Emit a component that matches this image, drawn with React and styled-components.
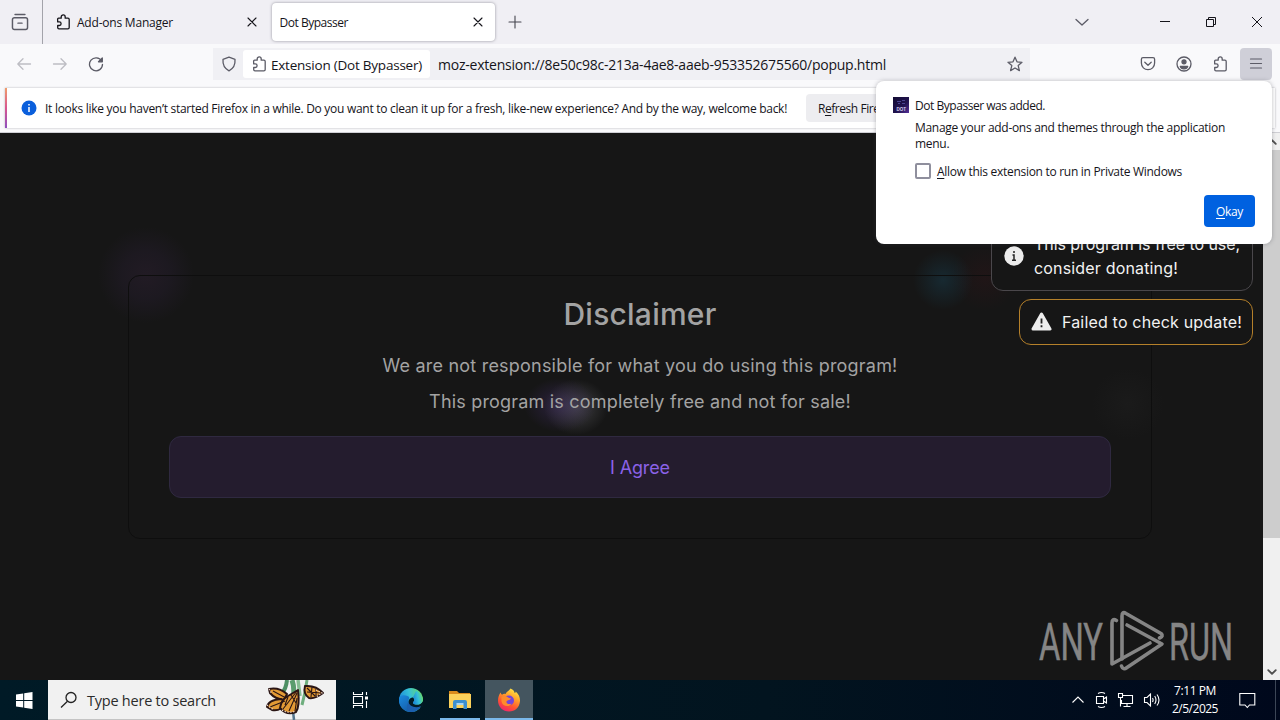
import React from "react";
import styled, { createGlobalStyle } from "styled-components";

export default function App() {
  return (
    <>
      <GlobalStyle />
      <Desktop>
        <TabBar />
        <AddressBar />
        <Notification />
        <Page />
        <Taskbar />
        <AddonPopup />
      </Desktop>
    </>
  );
}

const Icon = ({ size = 16, width = 1.3, children }) => (
  <svg
    width={size}
    height={size}
    viewBox="0 0 16 16"
    fill="none"
    stroke="currentColor"
    strokeWidth={width}
    strokeLinecap="round"
    strokeLinejoin="round"
  >
    {children}
  </svg>
);

const PuzzleIcon = () => (
  <Icon>
    <path d="M2.6 5.2c0-.6.4-1 1-1h2.600V2.900a2 2 0 0 1 4 0v1.300h2.700c.8 0 1.300.5 1.300 1.300v8.100c0 .8-.5 1.300-1.300 1.300H4c-.8 0-1.300-.5-1.300-1.300v-2.100h1.600a1.800 1.800 0 0 0 0-3.600H2.700z" />
  </Icon>
);

const CloseIcon = () => (
  <Icon width={1.1}>
    <path d="M4 4l8 8M12 4l-8 8" />
  </Icon>
);

const TabBar = () => (
  <Tabs>
    <RecentButton>
      <Icon size={18} width={1.3}>
        <path d="M3.600 1.400h8.800M3 4.200h10c1 0 1.700.7 1.700 1.700v7c0 1-.7 1.700-1.700 1.700H3c-1 0-1.700-.7-1.700-1.700v-7c0-1 .7-1.700 1.700-1.700zM6.200 9h3.600" />
      </Icon>
    </RecentButton>
    <Tab>
      <PuzzleIcon />
      <TabTitle $spacing={-0.213}>Add-ons Manager</TabTitle>
      <CloseIcon />
    </Tab>
    <Tab $active>
      <TabTitle $spacing={-0.473}>Dot Bypasser</TabTitle>
      <CloseIcon />
    </Tab>
    <NewTab>
      <Icon width={1.1}>
        <path d="M8 2v12M2 8h12" />
      </Icon>
    </NewTab>
    <WindowControls>
      <Icon width={1.3}>
        <path d="M2 5.500l6 5.500 6-5.500" />
      </Icon>
      <svg width="12" height="12" stroke="#15141a">
        <path d="M1 5.500h10" />
      </svg>
      <svg width="12" height="12" fill="none" stroke="#15141a">
        <path d="M1.500 3.500h7v7h-7zM3.500 3.500v-2h7v7h-2" />
      </svg>
      <svg width="12" height="12" stroke="#15141a">
        <path d="M1 1l10 10M11 1L1 11" />
      </svg>
    </WindowControls>
  </Tabs>
);

const AddressBar = () => (
  <Toolbar>
    <NavButtons>
      <NavButton $disabled>
        <Icon>
          <path d="M14.500 8H1.800M7 2.800L1.800 8 7 13.200" />
        </Icon>
      </NavButton>
      <NavButton $disabled>
        <Icon>
          <path d="M1.500 8h12.700M9 2.800L14.200 8 9 13.200" />
        </Icon>
      </NavButton>
      <NavButton>
        <Icon>
          <path d="M13.600 5A6.500 6.500 0 1 0 14.500 8.300" />
          <path d="M14.300 2v3.800H10.500z" fill="currentColor" />
        </Icon>
      </NavButton>
    </NavButtons>
    <UrlField>
      <Icon>
        <path d="M8 1.200l6 2.200c.4 4.800-1.200 9-6 11.400C3.200 12.400 1.600 8.200 2 3.400z" />
      </Icon>
      <Identity>
        <PuzzleIcon />
        <IdentityText>Extension (Dot Bypasser)</IdentityText>
      </Identity>
      <Url>moz-extension://8e50c98c-213a-4ae8-aaeb-953352675560/popup.html</Url>
      <Icon>
        <path d="M8 1.200l2 4.600 5 .5-3.800 3.300 1.200 5L8 12l-4.400 2.600 1.200-5L1 6.300l5-.5z" />
      </Icon>
    </UrlField>
    <ToolbarIcons>
      <Icon>
        <path d="M3 1.700h10c1 0 1.600.6 1.600 1.600V7c0 4-3 6.700-6.600 6.700S1.400 11 1.400 7V3.300c0-1 .6-1.600 1.600-1.600zM4.800 6.200L8 9.200l3.200-3" />
      </Icon>
      <Icon>
        <circle cx="8" cy="8" r="7" />
        <circle cx="8" cy="5.800" r="2" fill="currentColor" />
        <path d="M4.300 10.300h7.400c-.4 1.700-2 2.500-3.700 2.500s-3.300-.8-3.700-2.500z" fill="currentColor" />
      </Icon>
      <PuzzleIcon />
    </ToolbarIcons>
    <MenuButton>
      <Icon width={1.2}>
        <path d="M2.500 3h11M2.500 7.500h11M2.500 12h11" />
      </Icon>
    </MenuButton>
  </Toolbar>
);

const Notification = () => (
  <NotificationArea>
    <NotificationCard>
      <svg width="16" height="16">
        <circle cx="8" cy="8" r="7.500" fill="#0a5fdc" />
        <path d="M8 4v1.600M8 7v5" stroke="#fff" strokeWidth="1.500" />
      </svg>
      <Message>
        It looks like you haven’t started Firefox in a while. Do you want to
        clean it up for a fresh, like-new experience? And by the way, welcome
        back!
      </Message>
      <RefreshButton>
        R<u>e</u>fresh Firefox…
      </RefreshButton>
    </NotificationCard>
  </NotificationArea>
);

const Page = () => (
  <PageArea>
    <Content>
      <Card>
        <Title>Disclaimer</Title>
        <Line $spacing={0.21}>
          We are not responsible for what you do using this program!
        </Line>
        <Line $spacing={0.19}>
          This program is completely free and not for sale!
        </Line>
        <AgreeButton>I Agree</AgreeButton>
      </Card>
      <Toasts>
        <Toast $border="#4a474b" $padding="10px 12px">
          <svg width="20" height="20">
            <circle cx="10" cy="10" r="9.700" fill="#ececec" />
            <path d="M10 5v2M8.500 9H10v5M8 14.200h4" stroke="#222" strokeWidth="1.500" fill="none" />
          </svg>
          <div>
            <ToastLine $spacing={-0.063}>This program is free to use,</ToastLine>
            <ToastLine $spacing={0.169}>consider donating!</ToastLine>
          </div>
        </Toast>
        <Toast $border="#b5802a" $padding="10px 10px 10px 11px">
          <svg width="21" height="20">
            <path
              d="M10.500 2L19 17H2z"
              fill="#ececec"
              stroke="#ececec"
              strokeWidth="3"
              strokeLinejoin="round"
            />
            <path d="M10.500 6.500v5M10.500 13.300v2" stroke="#222" strokeWidth="1.800" />
          </svg>
          <ToastLine $spacing={0.175}>Failed to check update!</ToastLine>
        </Toast>
      </Toasts>
      <Watermark viewBox="0 0 200 64">
        <g
          fill="#858585"
          stroke="#858585"
          strokeWidth=".5"
          fontFamily="Roboto, sans-serif"
          fontSize="51"
        >
          <text x="0" y="50" textLength="64" lengthAdjust="spacingAndGlyphs">
            ANY
          </text>
          <text x="130" y="50" textLength="64" lengthAdjust="spacingAndGlyphs">
            RUN
          </text>
        </g>
        <g
          fill="none"
          stroke="#858585"
          strokeWidth="3.600"
          strokeLinejoin="round"
          strokeLinecap="round"
        >
          <path d="M77.500 10.500Q73 8 73 13V54L111 33" />
          <path d="M83 49V6Q83 1 87 3.500L122 23.500Q125 26 120.500 28" />
          <path d="M88 15L123 34L88 57.500Q84 60.500 82.500 56" />
        </g>
      </Watermark>
    </Content>
    <Scrollbar>
      <ScrollArrow>
        <Icon size={10} width={3}>
          <path d="M2 11l6-6 6 6" />
        </Icon>
      </ScrollArrow>
      <Thumb />
      <ScrollArrow>
        <Icon size={10} width={3}>
          <path d="M2 5l6 6 6-6" />
        </Icon>
      </ScrollArrow>
    </Scrollbar>
  </PageArea>
);

const AddonPopup = () => (
  <Popup>
    <svg width="16" height="16">
      <defs>
        <linearGradient id="dot" x1="0" y1="0" x2="1" y2="1">
          <stop offset="0" stopColor="#120b33" />
          <stop offset=".6" stopColor="#21134f" />
          <stop offset="1" stopColor="#55309a" />
        </linearGradient>
      </defs>
      <rect width="16" height="16" fill="url(#dot)" />
      <path d="M4 4.500h4M9 3.500h3M5 6.500h2M9 6.500h3" stroke="#4b4590" />
      <text x="3.500" y="13.500" fill="#d6cff0" fontSize="4.500" fontWeight="700" fontFamily="Liberation Sans, sans-serif">
        DOT
      </text>
    </svg>
    <PopupBody>
      <PopupText $spacing={-0.464}>Dot Bypasser was added.</PopupText>
      <PopupDescription>
        <PopupText $spacing={-0.296}>
          Manage your add-ons and themes through the application
        </PopupText>
        <PopupText $spacing={-0.296}>menu.</PopupText>
      </PopupDescription>
      <CheckRow>
        <CheckBox />
        <PopupText $spacing={-0.293}>
          <u>A</u>llow this extension to run in Private Windows
        </PopupText>
      </CheckRow>
      <OkayButton>
        <span>
          <u>O</u>kay
        </span>
      </OkayButton>
    </PopupBody>
  </Popup>
);

const Butterflies = () => (
  <svg width="62" height="40" viewBox="0 0 62 40">
    <g fill="none">
      <path d="M22 0q-1 9-5 13" stroke="#4d8f63" strokeWidth="4" />
      <path d="M27 0q3 8 1 20" stroke="#5a9c6d" strokeWidth="5" />
      <path d="M33 0q1 8 2 16" stroke="#86bd92" strokeWidth="3.500" />
      <path d="M42 0q-2 14-5 25" stroke="#6fae7e" strokeWidth="3" />
      <path d="M28 31l1 9" stroke="#54748c" strokeWidth="2.500" />
    </g>
    <g fill="#e39a35" stroke="#2a1514" strokeWidth="2" strokeLinejoin="round">
      <path d="M4 9q10-2 18 5l-3 6q-9-1-14-7z" />
      <path d="M2 27q1-7 14-8l6 4q-7 9-15 7z" />
      <path d="M33 10q2 16-2 22-9 4-16-4 1-8 8-12z" />
      <path d="M40 6q11-1 18 7-8 6-14 5-6-4-4-12z" />
    </g>
    <path
      d="M8 11l13 7M5 27l15-6M32 11L18 29M32 13l-8 18M32 18l-2 13M23 17l-3 8M26 15l5 8M42 8l8 8M42 12l14 1M47 7l-1 10M51 9v7"
      stroke="#2a1514"
      strokeWidth="1.100"
      fill="none"
    />
    <path
      d="M2 25l6 4.500M4 9l3 5M17 30q6 4 14 1M51 10l6 3-6 4"
      stroke="#f4dcd0"
      strokeWidth="1.100"
      strokeDasharray="1.300 1.600"
      fill="none"
    />
  </svg>
);

const EdgeIcon = () => (
  <svg width="24" height="24" viewBox="0 0 24 24">
    <defs>
      <linearGradient id="edgeTop" x1="0" y1=".6" x2="1" y2=".3">
        <stop offset="0" stopColor="#1a86d8" />
        <stop offset=".5" stopColor="#35bfd8" />
        <stop offset="1" stopColor="#6bdc62" />
      </linearGradient>
      <linearGradient id="edgeLow" x1="0" y1="0" x2="1" y2="1">
        <stop offset="0" stopColor="#1b8be0" />
        <stop offset="1" stopColor="#134a93" />
      </linearGradient>
    </defs>
    <circle cx="12" cy="12" r="12" fill="url(#edgeTop)" />
    <path d="M0 12C0 7 5 6.500 8.500 8 12 9.500 9 11 9.500 14c.6 4 7 7 12.500 4-2 3.500-5.800 6-10 6C5.400 24 0 18.600 0 12z" fill="url(#edgeLow)" />
    <path d="M14 9.500c2 1.600 1.200 3.600.2 4.700-.9 1.200 1.600 2.900 5.300 2.300 2.200-.4 4-2 4.500-4V19l-4 1c-5 1.500-10.500-2-10.500-6 0-2.500 2-5 4.500-4.500z" fill="#031a25" />
    <path d="M14.200 14.200c-.9 1.200 1.600 2.700 5.200 2.200 2.400-.4 4-2 4.600-4.400 0-4-3-8-7-9l-3 6.500c2 1.600 1.200 3.600.2 4.700z" fill="url(#edgeTop)" />
    <path d="M9.500 14c.6 4 7 7 12.500 4-2 3.500-5.800 6-10 6-4 0-5.500-5-2.500-10z" fill="#1b5fae" />
  </svg>
);

const FolderIcon = () => (
  <svg width="22" height="20" viewBox="0 0 22 20">
    <path d="M0 1h8l2 2h11v6H0z" fill="#d98b1c" />
    <path d="M0 4h22v14H0z" fill="#fbd15b" />
    <path d="M4 19v-7q0-2 2-2h10q2 0 2 2v7h-3.500v-4h-7v4z" fill="#3c8fd0" />
    <path d="M7.500 13h7v2h-7z" fill="#a8d5f2" />
  </svg>
);

const FirefoxIcon = () => (
  <svg width="24" height="24" viewBox="0 0 24 24">
    <defs>
      <linearGradient id="fox" x1=".8" y1="0" x2=".3" y2="1">
        <stop offset="0" stopColor="#fff04a" />
        <stop offset=".35" stopColor="#ffa62b" />
        <stop offset=".7" stopColor="#ff5330" />
        <stop offset="1" stopColor="#f0246e" />
      </linearGradient>
    </defs>
    <path d="M3.500 4.500c.3 1 .8 1.800 1.500 2.200 1-.8 2.400-1 3.600-.7C9.500 3.500 12 3 13.500.5c3 1 3.800 3 4.200 4.500.6-.2 1-.8 1-1.600 3 2.400 4.500 6 4.300 9.600C22.500 19.500 18 23.500 12 23.500S1 19 1 12.500c0-3 1-6 2.500-8z" fill="url(#fox)" />
    <circle cx="12" cy="12.500" r="5" fill="#7346d8" />
    <path d="M4.500 9c2-1.500 5-1 7 .8l2.500.7c-1 2-3.500 1.500-4.500 3-.5 1.500 2 3.500 5 2-2 4-9 3.500-10-2z" fill="#ff8b2c" />
  </svg>
);

const Taskbar = () => (
  <Bar>
    <StartButton>
      <svg width="17" height="17" fill="#fff">
        <path d="M0 2.400L7.200 1.400V8H0zM8.200 1.200L16.500 0V8H8.200zM0 9h7.200v6.600L0 14.600zM8.200 9h8.300v8l-8.300-1.200z" />
      </svg>
    </StartButton>
    <SearchBox>
      <svg width="18" height="18" fill="none" stroke="#222" strokeWidth="1.300">
        <circle cx="11" cy="6.500" r="5" />
        <path d="M7.500 10.300L1 16.500" />
      </svg>
      <SearchText>Type here to search</SearchText>
      <Butterflies />
    </SearchBox>
    <TaskButton>
      <svg width="17" height="16" fill="none" stroke="#fff" strokeWidth="1.100">
        <path d="M1.500 0v2.500h9V0M1.500 16v-2.500h9V16M1.500 4.500h9v7h-9zM14.500 0v3M14.500 9v7" />
        <path d="M13 4.500h3v3h-3z" fill="#fff" stroke="none" />
      </svg>
    </TaskButton>
    <TaskButton $wide>
      <EdgeIcon />
    </TaskButton>
    <TaskButton $running>
      <FolderIcon />
    </TaskButton>
    <TaskButton $active>
      <FirefoxIcon />
    </TaskButton>
    <Tray>
      <svg width="14" height="16">
        <path d="M1.500 10.500L7 5l5.500 5.500" />
      </svg>
      <svg width="14" height="18">
        <path d="M2.500 5.500h7v7h-7zM9.500 8l3-2v6l-3-2M4 2.500Q7.500.5 11 2.500M4 15.500q3.500 2 7 0" />
      </svg>
      <svg width="17" height="16">
        <path d="M5.500 3.500h10v8h-11V8M10 11.500v3M6.500 14.500h7M1.500 1.500h4v4h-4zM3.500 5.500v9" />
      </svg>
      <svg width="18" height="16">
        <path d="M1.500 5.500h2.500l3.500-3.500v12L4 10.500H1.500zM9.500 6q1.200 2 0 4M11.700 4q2.600 4 0 8M14 2.500q4 5.500 0 11" />
      </svg>
    </Tray>
    <Clock>
      <ClockLine $spacing={-0.409}>7:11 PM</ClockLine>
      <ClockLine $spacing={-0.496}>2/5/2025</ClockLine>
    </Clock>
    <ActionCenter>
      <svg width="17" height="17" fill="none" stroke="#fff" strokeWidth="1.100">
        <path d="M.8 1.500h15v11.500h-5.300L8.300 15.500 6 13H.8z" />
      </svg>
    </ActionCenter>
  </Bar>
);

const GlobalStyle = createGlobalStyle`
  * {
    box-sizing: border-box;
  }
  body {
    margin: 0;
    overflow: hidden;
  }
  svg {
    flex: none;
    display: block;
  }
  u {
    text-decoration-thickness: 1px;
    text-underline-offset: 2px;
  }
`;

const Desktop = styled.div`
  position: relative;
  width: 1280px;
  height: 720px;
  display: flex;
  flex-direction: column;
  overflow: hidden;
  font-family: "Open Sans", sans-serif;
  font-size: 12px;
  color: #15141a;
  background: #f9f9fb;
  white-space: nowrap;
`;

const Tabs = styled.div`
  height: 44px;
  flex: none;
  display: flex;
  align-items: center;
  background: #f0eff4;
`;

const RecentButton = styled.div`
  width: 43px;
  height: 44px;
  display: flex;
  align-items: center;
  padding-left: 11px;
  border-right: 1px solid #a3a3aa;
  margin-right: 4px;
  color: #5b5b66;
`;

const Tab = styled.div`
  width: ${({ $active }) => ($active ? 223 : 224)}px;
  height: 38px;
  display: flex;
  align-items: center;
  gap: 6px;
  padding: 0 ${({ $active }) => ($active ? 9 : 11)}px 0 8px;
  border-radius: 4px;
  background: ${({ $active }) => ($active ? "#fff" : "transparent")};
  box-shadow: ${({ $active }) =>
    $active ? "0 0 3px rgba(80, 80, 95, 0.6)" : "none"};
  & + & {
    margin-left: 0.5px;
  }
`;

const TabTitle = styled.span`
  flex: 1;
  padding-top: 1px;
  letter-spacing: ${({ $spacing }) => $spacing}px;
`;

const NewTab = styled.div`
  margin-left: 12px;
  color: #45454e;
`;

const WindowControls = styled.div`
  margin-left: auto;
  display: flex;
  align-items: center;
  padding-right: 17px;
  gap: 34px;
  color: #5b5b66;
  svg:first-child {
    margin-right: 35px;
  }
`;

const Toolbar = styled.div`
  height: 41px;
  flex: none;
  display: flex;
  align-items: center;
  padding: 0 8px 1px;
  color: #5b5b66;
`;

const NavButtons = styled.div`
  width: 205px;
  display: flex;
  gap: 20px;
  padding-left: 8px;
`;

const NavButton = styled.div`
  color: ${({ $disabled }) => ($disabled ? "#bdbdc3" : "#5b5b66")};
`;

const UrlField = styled.div`
  width: 817px;
  height: 32px;
  display: flex;
  align-items: center;
  padding: 0 7px 0 8px;
  background: #f0f0f4;
`;

const Identity = styled.div`
  width: 187px;
  height: 28px;
  display: flex;
  align-items: center;
  gap: 4px;
  margin-left: 6px;
  padding-left: 8px;
  border-radius: 3px;
  background: #fff;
`;

const IdentityText = styled.span`
  padding-top: 2px;
  font-size: 13.5px;
  letter-spacing: -0.225px;
  color: #15141a;
`;

const Url = styled.span`
  flex: 1;
  margin-left: 8px;
  padding-top: 1px;
  font-size: 14px;
  letter-spacing: -0.232px;
  color: #15141a;
`;

const ToolbarIcons = styled.div`
  display: flex;
  gap: 20px;
  margin-left: auto;
  margin-right: 12px;
`;

const MenuButton = styled.div`
  width: 32px;
  height: 32px;
  display: grid;
  place-items: center;
  border-radius: 4px;
  background: #cfcfd8;
`;

const NotificationArea = styled.div`
  height: 48px;
  flex: none;
  padding: 3px 5px 4px;
  border-bottom: 1px solid #cfcfd4;
`;

const NotificationCard = styled.div`
  height: 40px;
  display: flex;
  align-items: center;
  padding-left: 14px;
  border-left: 2px solid;
  border-image: linear-gradient(#f0a06a, #d8558f, #8a4fc0) 1;
  background: #fff;
  box-shadow: 0 0 2px rgba(58, 57, 68, 0.35);
`;

const Message = styled.span`
  margin-left: 8px;
  padding-top: 1px;
  width: 761px;
  letter-spacing: -0.282px;
`;

const RefreshButton = styled.div`
  height: 28px;
  line-height: 29px;
  padding: 0 12px;
  border-radius: 4px;
  background: #ededf0;
  letter-spacing: -0.45px;
`;

const PageArea = styled.div`
  flex: 1;
  min-height: 0;
  display: flex;
`;

const Content = styled.div`
  position: relative;
  flex: 1;
  padding: 142px 111px 0 128px;
  font-family: Inter, sans-serif;
  background: radial-gradient(ellipse 36px 27px at 560px 272px, rgba(76, 50, 125, 0.4), transparent),
    radial-gradient(ellipse 32px 28px at 576px 274px, rgba(120, 120, 126, 0.42), transparent),
    radial-gradient(circle at 146px 142px, rgba(50, 30, 55, 0.45) 40%, transparent) 110px 106px / 0 0 no-repeat,
    radial-gradient(circle at 146px 142px, rgba(50, 34, 56, 0.42), rgba(44, 32, 56, 0.3) 24px, transparent 48px),
    radial-gradient(circle at 943px 147px, rgba(25, 70, 90, 0.4), transparent 30px),
    radial-gradient(circle at 985px 144px, rgba(60, 20, 25, 0.28), transparent 34px),
    radial-gradient(circle at 1128px 271px, rgba(40, 40, 40, 0.25), transparent 36px),
    #161616;
`;

const Card = styled.div`
  height: 264px;
  display: flex;
  flex-direction: column;
  align-items: center;
  padding: 20px 40px 0;
  border: 1px solid #0e0e0e;
  border-radius: 12px;
  color: #a3a3a3;
`;

const Title = styled.h1`
  margin: 0 0 20px;
  font-size: 30px;
  font-weight: 500;
  line-height: 36px;
  letter-spacing: 0.23px;
`;

const Line = styled.p`
  margin: 0 0 8px;
  font-size: 18px;
  line-height: 28px;
  letter-spacing: ${({ $spacing }) => $spacing}px;
`;

const AgreeButton = styled.div`
  width: 942px;
  height: 62px;
  margin-top: 12px;
  display: grid;
  place-items: center;
  border: 1px solid #2f2940;
  border-radius: 12px;
  background: #241c2e;
  color: #8b62e8;
  font-size: 18px;
  letter-spacing: -0.117px;
`;

const Toasts = styled.div`
  position: absolute;
  top: 88px;
  right: 10px;
  display: flex;
  flex-direction: column;
  align-items: flex-end;
  gap: 8px;
`;

const Toast = styled.div`
  display: flex;
  align-items: center;
  gap: 10px;
  padding: ${({ $padding }) => $padding};
  border: 1px solid ${({ $border }) => $border};
  border-radius: 12px;
  background: #161616;
  color: #f2f2f2;
`;

const ToastLine = styled.div`
  font-size: 16px;
  line-height: 24px;
  letter-spacing: ${({ $spacing }) => $spacing}px;
`;

const Watermark = styled.svg`
  position: absolute;
  left: 1039px;
  top: 477px;
  width: 200px;
  height: 64px;
`;

const Scrollbar = styled.div`
  width: 17px;
  display: flex;
  flex-direction: column;
  background: #f0f0f0;
  color: #505050;
`;

const ScrollArrow = styled.div`
  height: 17px;
  display: grid;
  place-items: center;
`;

const Thumb = styled.div`
  height: 388px;
  margin-bottom: 125px;
  background: #cdcdcd;
`;

const Popup = styled.div`
  position: absolute;
  left: 876px;
  top: 81px;
  width: 396px;
  height: 163px;
  display: flex;
  gap: 6px;
  padding: 16px 17px;
  border-radius: 8px;
  background: #fff;
  box-shadow: 0 0 4px rgba(58, 57, 68, 0.35);
`;

const PopupBody = styled.div`
  flex: 1;
  display: flex;
  flex-direction: column;
  padding-top: 1px;
`;

const PopupText = styled.div`
  line-height: 16px;
  letter-spacing: ${({ $spacing }) => $spacing}px;
`;

const PopupDescription = styled.div`
  margin-top: 6px;
`;

const CheckRow = styled.div`
  display: flex;
  align-items: flex-end;
  gap: 6px;
  margin-top: 11px;
  height: 17px;
`;

const CheckBox = styled.span`
  width: 16px;
  height: 16px;
  margin-bottom: 1px;
  border: 2px solid #8f8f9d;
  border-radius: 2px;
`;

const OkayButton = styled.div`
  width: 51px;
  height: 32px;
  margin-top: 15px;
  align-self: flex-end;
  display: grid;
  place-items: center;
  border-radius: 4px;
  background: #0061e0;
  color: #fff;
  letter-spacing: -0.33px;
`;

const Bar = styled.div`
  height: 40px;
  flex: none;
  display: flex;
  background: linear-gradient(90deg, #001a26, #02141f 60%, #00081c);
  color: #fff;
`;

const StartButton = styled.div`
  width: 48px;
  display: grid;
  place-items: center;
`;

const SearchBox = styled.div`
  width: 288px;
  display: flex;
  align-items: center;
  padding: 0 9px 0 12px;
  border-bottom: 1px solid #c4c4c4;
  background: #f1f1f1;
`;

const SearchText = styled.span`
  flex: 1;
  margin-left: 9px;
  padding-top: 2px;
  font-size: 14.5px;
  letter-spacing: -0.233px;
  color: #2b2b2b;
`;

const TaskButton = styled.div`
  width: ${({ $wide, $running }) => ($wide ? 56 : $running ? 40 : 48)}px;
  margin-right: ${({ $running }) => ($running ? 5 : 0)}px;
  padding-right: ${({ $wide }) => ($wide ? 2 : 0)}px;
  display: grid;
  place-items: center;
  background: ${({ $active }) => ($active ? "#44555f" : "transparent")};
  box-shadow: ${({ $active, $running }) =>
    $active || $running ? "inset 0 -2px #7ab8ea" : "none"};
`;

const Tray = styled.div`
  display: flex;
  align-items: center;
  gap: 9px;
  margin-left: auto;
  svg {
    fill: none;
    stroke: #fff;
    stroke-width: 1.1;
  }
`;

const Clock = styled.div`
  width: 68px;
  text-align: center;
  padding-top: 2px;
`;

const ClockLine = styled.div`
  line-height: 18px;
  letter-spacing: ${({ $spacing }) => $spacing}px;
`;

const ActionCenter = styled.div`
  width: 47px;
  margin-right: 4px;
  display: grid;
  place-items: center;
  padding-right: 9px;
  border-right: 1px solid #3c4656;
`;
